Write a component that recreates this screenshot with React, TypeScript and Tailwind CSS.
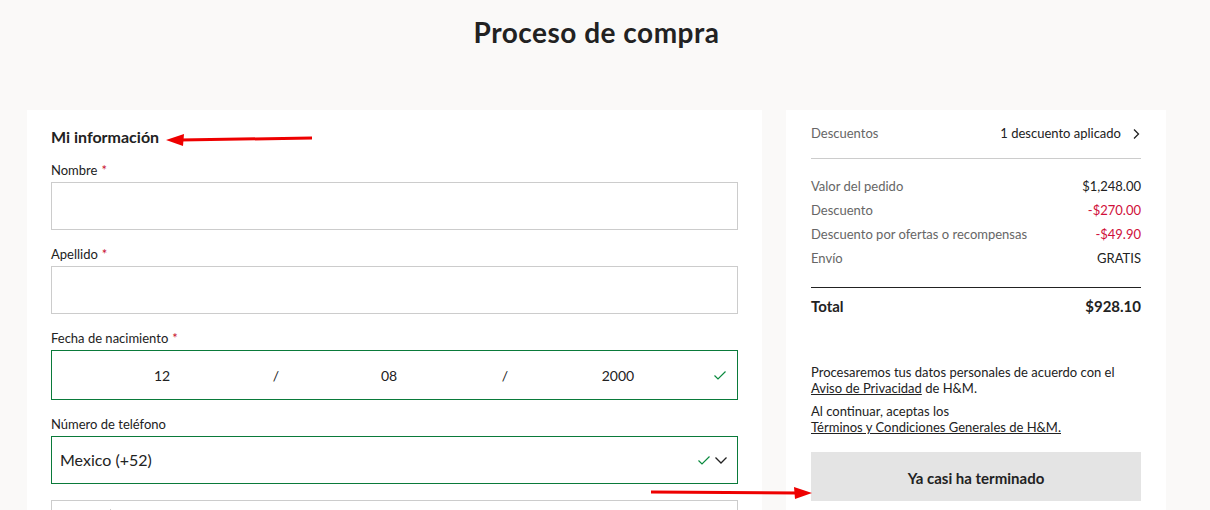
import React from 'react';

const font = { fontFamily: 'Lato, "Open Sans", sans-serif' };

function Label({ text, required }: { text: string; required?: boolean }) {
  return (
    <div className="h-4 mb-1 text-[13px] leading-4 text-[#222]">
      {text}
      {required && <span className="ml-1 text-[#c8102e]">*</span>}
    </div>
  );
}

function Check() {
  return (
    <svg width="14" height="14" viewBox="0 0 14 14" fill="none">
      <path d="M1.5 7.5 L5 11 L12.5 3.5" stroke="#0a8a3e" strokeWidth="1.2" />
    </svg>
  );
}

function Chevron({ dir = 'down' }: { dir?: 'down' | 'right' }) {
  return dir === 'down' ? (
    <svg width="14" height="14" viewBox="0 0 14 14" fill="none">
      <path d="M1.5 4.5 L7 10 L12.5 4.5" stroke="#222" strokeWidth="1.3" />
    </svg>
  ) : (
    <svg width="10" height="12" viewBox="0 0 10 12" fill="none">
      <path d="M3 1.5 L7.5 6 L3 10.5" stroke="#222" strokeWidth="1.3" />
    </svg>
  );
}

function Row({ label, value, red }: { label: string; value: string; red?: boolean }) {
  return (
    <div className="flex justify-between h-6 items-center text-[13px]">
      <span className="text-[#666]">{label}</span>
      <span className={red ? 'text-[#d0103a]' : 'text-[#222]'}>{value}</span>
    </div>
  );
}

export default function App() {
  return (
    <div className="relative min-h-[510px] bg-[#faf9f8] overflow-hidden" style={font}>
      <h1 className="pt-[15px] pr-[17px] h-[110px] text-center text-[28px] leading-[34px] font-bold text-[#222] tracking-[0.5px]">
        Proceso de compra
      </h1>

      <div className="flex gap-6 pl-[27px]">
        {/* left form */}
        <div className="w-[735px] bg-white px-6 pt-[17px] h-[420px]">
          <h2 className="text-[16px] leading-[20px] font-bold text-[#222] mb-[15px]">Mi información</h2>

          <Label text="Nombre" required />
          <div className="h-12 border border-[#cccccc] mb-4" />

          <Label text="Apellido" required />
          <div className="h-12 border border-[#cccccc] mb-4" />

          <Label text="Fecha de nacimiento" required />
          <div className="h-[50px] border border-[#0a7a3a] mb-4 flex items-center text-[14px] text-[#222]">
            <span className="w-[220px] shrink-0 text-center">12</span>
            <span className="w-[8px] shrink-0 text-center">/</span>
            <span className="w-[218px] shrink-0 text-center">08</span>
            <span className="w-[14px] shrink-0 text-center">/</span>
            <span className="w-[192px] shrink-0 pl-[20px] text-center">2000</span>
            <span className="flex-1 flex justify-end pr-[10px]"><Check /></span>
          </div>

          <Label text="Número de teléfono" />
          <div className="h-12 border border-[#0a7a3a] mb-4 flex items-center pl-2 pr-[9px] text-[16px] text-[#222]">
            <span className="flex-1">Mexico (+52)</span>
            <Check />
            <span className="ml-[3px] flex"><Chevron /></span>
          </div>

          <div className="h-12 border border-[#cccccc] flex">
            <div className="w-[59px] border-r border-[#cccccc] mt-[8px] mb-[8px]" />
          </div>
        </div>

        {/* right summary */}
        <div className="w-[380px] bg-white px-[25px] pt-[12px] h-[420px]">
          <div className="flex justify-between items-center h-[23px] text-[13px]">
            <span className="text-[#666]">Descuentos</span>
            <span className="flex items-center gap-[10px] text-[#222]">
              1 descuento aplicado
              <Chevron dir="right" />
            </span>
          </div>
          <div className="mt-[13px] border-t border-[#cccccc]" />
          <div className="pt-4">
            <Row label="Valor del pedido" value="$1,248.00" />
            <Row label="Descuento" value="-$270.00" red />
            <Row label="Descuento por ofertas o recompensas" value="-$49.90" red />
            <Row label="Envío" value="GRATIS" />
          </div>
          <div className="mt-[16px] border-t border-[#222]" />
          <div className="flex justify-between items-center h-[36px] text-[15px] font-bold text-[#222]">
            <span>Total</span>
            <span>$928.10</span>
          </div>

          <div className="mt-[40px] text-[13px] leading-4 text-[#222]">
            <p>
              Procesaremos tus datos personales de acuerdo con el{' '}
              <span className="underline">Aviso de Privacidad</span> de H&amp;M.
            </p>
            <p className="mt-[7px]">
              Al continuar, aceptas los
              <br />
              <span className="underline">Términos y Condiciones Generales de H&amp;M.</span>
            </p>
          </div>

          <button className="mt-[17px] w-full h-[49px] pt-[3px] bg-[#e4e4e4] text-[15px] font-bold text-[#222]">
            Ya casi ha terminado
          </button>
        </div>
      </div>

      {/* annotation arrows */}
      <svg className="absolute left-0 top-0 pointer-events-none" width="1210" height="510">
        <line x1="312" y1="138" x2="180" y2="140" stroke="#ee0000" strokeWidth="3" />
        <polygon points="166,140 184,134 183,146" fill="#ee0000" />
        <line x1="651" y1="492" x2="798" y2="493" stroke="#ee0000" strokeWidth="3" />
        <polygon points="812,493 794,487 795,499" fill="#ee0000" />
      </svg>
    </div>
  );
}
